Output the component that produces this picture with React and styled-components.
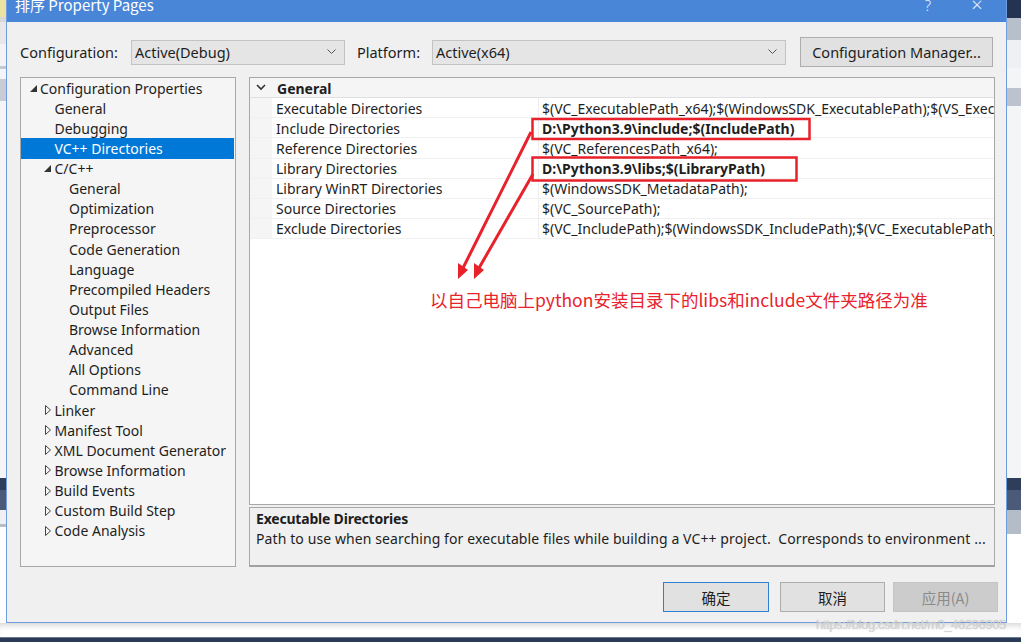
import React from "react";
import styled, { createGlobalStyle } from "styled-components";

const GlobalStyle = createGlobalStyle`
  html, body { margin: 0; padding: 0; background: #ffffff; }
  body { font-family: "Noto Sans", "Noto Sans CJK SC", sans-serif; overflow: hidden; }
  #root { width: 1021px; height: 642px; }
`;

const FONT = `"Noto Sans", "Noto Sans CJK SC", sans-serif`;

const Screen = styled.div`
  position: relative;
  width: 1021px;
  height: 642px;
  display: grid;
  grid-template-columns: 6px 1001px 14px;
  grid-template-rows: 623px 14px 5px;
  background: #ffffff;
  overflow: hidden;
`;

const Strip = styled.div`
  display: flex;
  flex-direction: column;
  background: #f4f5f7;
`;

const StripBlock = styled.div`
  height: ${(p) => p.h}px;
  background: ${(p) => p.c};
  flex: ${(p) => (p.grow ? 1 : "none")};
`;

const BottomGap = styled.div`
  grid-column: 1 / 4;
  background: #ffffff;
  box-shadow: inset 0 6px 6px -4px rgba(0, 0, 0, 0.18);
`;

const BottomBar = styled.div`
  grid-column: 1 / 4;
  background: #2b3a55;
  border-top: 1px solid #6a7a96;
`;

const Dialog = styled.div`
  display: flex;
  flex-direction: column;
  background: #f0f0f0;
  border: 1px solid #6f9be0;
  border-top: none;
  font-family: ${FONT};
  color: #1e1e1e;
  position: relative;
`;

const TitleBar = styled.div`
  height: 22px;
  background: #4a86d8;
  display: flex;
  align-items: flex-start;
  color: #ffffff;
  overflow: hidden;
`;

const TitleText = styled.div`
  flex: 1;
  font-size: 15px;
  line-height: 14px;
  margin-top: -2px;
  padding-left: 8px;
  font-family: "Noto Sans CJK SC", "Noto Sans", sans-serif;
`;

const TitleButton = styled.div`
  width: ${(p) => p.w}px;
  display: flex;
  justify-content: center;
  font-size: ${(p) => p.fs}px;
  line-height: 14px;
  margin-top: -2px;
  color: #e6eefa;
  font-weight: 300;
`;

const Body = styled.div`
  flex: 1;
  display: flex;
  flex-direction: column;
  padding: 15px 11px 0 13px;
`;

const ConfigRow = styled.div`
  display: flex;
  align-items: center;
  height: 30px;
`;

const Label = styled.span`
  font-size: 14.5px;
  margin-right: ${(p) => p.mr}px;
  margin-left: ${(p) => p.ml || 0}px;
  white-space: nowrap;
`;

const Select = styled.div`
  width: ${(p) => p.w}px;
  height: 25px;
  box-sizing: border-box;
  background: #e5e5e5;
  border: 1px solid #c3c3c3;
  display: flex;
  align-items: center;
  justify-content: space-between;
  padding: 0 8px 0 3px;
  font-size: 14.5px;
`;

const Chevron = styled.svg`
  width: 9px;
  height: 6px;
`;

const Button = styled.div`
  box-sizing: border-box;
  width: ${(p) => p.w}px;
  height: ${(p) => p.h || 30}px;
  margin-left: ${(p) => p.ml || 0}px;
  display: flex;
  align-items: center;
  justify-content: center;
  background: ${(p) => (p.disabled ? "#cccccc" : "#e1e1e1")};
  border: 1px solid ${(p) => (p.primary ? "#2f7fd6" : p.disabled ? "#c4c4c4" : "#adadad")};
  color: ${(p) => (p.disabled ? "#8a8a8a" : "#1e1e1e")};
  font-size: 14.5px;
  font-family: ${(p) => (p.cjk ? `"Noto Sans CJK SC", sans-serif` : FONT)};
`;

const Main = styled.div`
  display: flex;
  margin-top: 10px;
  gap: 13px;
  height: 490px;
`;

const Tree = styled.div`
  width: 216px;
  box-sizing: border-box;
  background: #f5f5f5;
  border: 1px solid #a8a8a8;
`;

const TreeRow = styled.div`
  height: 20.14px;
  display: flex;
  align-items: center;
  font-size: 14px;
  white-space: nowrap;
  padding-left: ${(p) => 5 + p.level * 14.5}px;
  background: ${(p) => (p.selected ? "#0078d7" : "transparent")};
  color: ${(p) => (p.selected ? "#ffffff" : "#1e1e1e")};
  margin-right: 1px;
`;

const Toggle = styled.span`
  width: 14px;
  display: inline-flex;
  align-items: center;
  justify-content: center;
  flex: none;
`;

const RightCol = styled.div`
  flex: 1;
  display: flex;
  flex-direction: column;
  gap: 2px;
`;

const Grid = styled.div`
  height: 428px;
  box-sizing: border-box;
  background: #ffffff;
  border: 1px solid #a8a8a8;
  overflow: hidden;
`;

const GridRow = styled.div`
  display: grid;
  grid-template-columns: 22px 266px 1fr;
  height: 20.14px;
  font-size: 14px;
  white-space: nowrap;
  border-bottom: 1px solid ${(p) => (p.header ? "#e0e0e0" : "#f0f0f0")};
  box-sizing: border-box;
`;

const Margin = styled.div`
  background: #f5f5f5;
  display: flex;
  align-items: center;
  justify-content: center;
`;

const Cell = styled.div`
  display: flex;
  align-items: center;
  padding-left: ${(p) => p.pl || 4}px;
  padding-top: 1px;
  overflow: hidden;
  background: ${(p) => (p.header ? "#f5f5f5" : "#ffffff")};
  border-left: ${(p) => (p.sep ? "1px solid #ededed" : "none")};
  font-weight: ${(p) => (p.bold ? 700 : 400)};
  grid-column: ${(p) => (p.span ? "2 / 4" : "auto")};
`;

const Desc = styled.div`
  height: 60px;
  box-sizing: border-box;
  background: #f0f0f0;
  border: 1px solid #a8a8a8;
  border-bottom: 2px solid #a0a0a0;
  padding: 1px 6px;
  font-size: 14px;
`;

const DescTitle = styled.div`
  font-weight: 700;
  line-height: 20px;
  letter-spacing: -0.2px;
`;

const DescText = styled.div`
  line-height: 20px;
  white-space: nowrap;
  letter-spacing: 0.1px;
`;

const Footer = styled.div`
  display: flex;
  justify-content: flex-end;
  margin-top: 15px;
  margin-right: -3px;
`;

const Annotation = styled.svg`
  position: absolute;
  left: 0;
  top: 0;
  width: 1001px;
  height: 623px;
  pointer-events: none;
  overflow: visible;
`;

const Note = styled.div`
  position: absolute;
  left: 423px;
  top: 287px;
  font-size: 17.5px;
  color: #e8232c;
  font-family: "Noto Sans CJK SC", "Noto Sans", sans-serif;
  white-space: nowrap;
`;

const Watermark = styled.div`
  position: absolute;
  left: 816px;
  top: 617px;
  font-size: 13px;
  letter-spacing: -0.4px;
  color: rgba(215, 215, 215, 0.9);
  font-family: "Liberation Sans", sans-serif;
  text-shadow: 0 0 1px rgba(140, 140, 140, 0.5);
  white-space: nowrap;
`;

const OpenTri = () => (
  <svg width="7" height="7" viewBox="0 0 7 7">
    <polygon points="7,0 7,7 0,7" fill="#333" />
  </svg>
);

const ClosedTri = () => (
  <svg width="6" height="10" viewBox="0 0 6 10">
    <polygon points="0.5,0.5 5.5,5 0.5,9.5" fill="none" stroke="#444" strokeWidth="1" />
  </svg>
);

const treeItems = [
  { label: "Configuration Properties", level: 0, t: "open" },
  { label: "General", level: 1 },
  { label: "Debugging", level: 1 },
  { label: "VC++ Directories", level: 1, selected: true },
  { label: "C/C++", level: 1, t: "open" },
  { label: "General", level: 2 },
  { label: "Optimization", level: 2 },
  { label: "Preprocessor", level: 2 },
  { label: "Code Generation", level: 2 },
  { label: "Language", level: 2 },
  { label: "Precompiled Headers", level: 2 },
  { label: "Output Files", level: 2 },
  { label: "Browse Information", level: 2 },
  { label: "Advanced", level: 2 },
  { label: "All Options", level: 2 },
  { label: "Command Line", level: 2 },
  { label: "Linker", level: 1, t: "closed" },
  { label: "Manifest Tool", level: 1, t: "closed" },
  { label: "XML Document Generator", level: 1, t: "closed" },
  { label: "Browse Information", level: 1, t: "closed" },
  { label: "Build Events", level: 1, t: "closed" },
  { label: "Custom Build Step", level: 1, t: "closed" },
  { label: "Code Analysis", level: 1, t: "closed" },
];

const props = [
  ["Executable Directories", "$(VC_ExecutablePath_x64);$(WindowsSDK_ExecutablePath);$(VS_ExecutablePath);$(MSBuild_ExecutablePath)"],
  ["Include Directories", "D:\\Python3.9\\include;$(IncludePath)", true],
  ["Reference Directories", "$(VC_ReferencesPath_x64);"],
  ["Library Directories", "D:\\Python3.9\\libs;$(LibraryPath)", true],
  ["Library WinRT Directories", "$(WindowsSDK_MetadataPath);"],
  ["Source Directories", "$(VC_SourcePath);"],
  ["Exclude Directories", "$(VC_IncludePath);$(WindowsSDK_IncludePath);$(VC_ExecutablePath_x64)"],
];

const DownChevron = () => (
  <Chevron viewBox="0 0 9 6">
    <polyline points="0.5,0.5 4.5,4.5 8.5,0.5" fill="none" stroke="#555" strokeWidth="1" />
  </Chevron>
);

export default function App() {
  return (
    <>
      <GlobalStyle />
      <Screen>
        <Strip>
          <StripBlock h={17} c="#ece3a2" />
          <StripBlock h={5} c="#d8d8d8" />
          <StripBlock h={22} c="#e8e8ea" />
          <StripBlock h={22} c="#f2f3f5" />
          <StripBlock h={3} c="#c4c8d0" />
          <StripBlock h={10} c="#f4f5f7" />
          <StripBlock h={22} c="#c7ccd5" />
          <StripBlock h={377} c="#f4f5f7" />
          <StripBlock h={12} c="#2d3d5a" />
          <StripBlock h={20} c="#4a5a78" />
          <StripBlock h={14} c="#eef0f3" />
          <StripBlock h={3} c="#b8bec8" />
          <StripBlock grow c="#ffffff" />
        </Strip>

        <Dialog>
          <TitleBar>
            <TitleText>排序 Property Pages</TitleText>
            <TitleButton w={40} fs={15}>?</TitleButton>
            <TitleButton w={58} fs={20}>×</TitleButton>
          </TitleBar>
          <Body>
            <ConfigRow>
              <Label mr={13}>Configuration:</Label>
              <Select w={214}>
                <span>Active(Debug)</span>
                <DownChevron />
              </Select>
              <Label ml={12} mr={12}>Platform:</Label>
              <Select w={354}>
                <span>Active(x64)</span>
                <DownChevron />
              </Select>
              <Button w={193} h={30} ml={14}>Configuration Manager...</Button>
            </ConfigRow>

            <Main>
              <Tree>
                {treeItems.map((it, i) => (
                  <TreeRow key={i} level={it.level} selected={it.selected}>
                    <Toggle>
                      {it.t === "open" ? <OpenTri /> : it.t === "closed" ? <ClosedTri /> : null}
                    </Toggle>
                    {it.label}
                  </TreeRow>
                ))}
              </Tree>

              <RightCol>
                <Grid>
                  <GridRow header>
                    <Margin>
                      <svg width="10" height="7" viewBox="0 0 10 7">
                        <polyline points="1,1 5,5 9,1" fill="none" stroke="#333" strokeWidth="1.6" />
                      </svg>
                    </Margin>
                    <Cell header bold span pl={5}>General</Cell>
                  </GridRow>
                  {props.map(([name, value, bold], i) => (
                    <GridRow key={i}>
                      <Margin />
                      <Cell>{name}</Cell>
                      <Cell sep bold={bold} pl={3}>{value}</Cell>
                    </GridRow>
                  ))}
                </Grid>
                <Desc>
                  <DescTitle>Executable Directories</DescTitle>
                  <DescText>
                    Path to use when searching for executable files while building a VC++ project.&nbsp; Corresponds to environment ...
                  </DescText>
                </Desc>
              </RightCol>
            </Main>

            <Footer>
              <Button w={106} h={30} primary cjk>确定</Button>
              <Button w={105} h={30} ml={11} cjk>取消</Button>
              <Button w={105} h={30} ml={8} disabled cjk>应用(A)</Button>
            </Footer>
          </Body>

          <Annotation viewBox="0 0 1001 623">
            <rect x="525.5" y="119" width="277" height="20" fill="none" stroke="#e8212a" strokeWidth="2.5" />
            <rect x="525.5" y="157.5" width="264" height="23" fill="none" stroke="#e8212a" strokeWidth="2.5" />
            <line x1="524" y1="132" x2="456" y2="268" stroke="#e8212a" strokeWidth="3" />
            <polygon points="451,279 451,263 461,270" fill="#e8212a" />
            <line x1="526" y1="174" x2="472" y2="268" stroke="#e8212a" strokeWidth="3" />
            <polygon points="467,279 467,263 477,270" fill="#e8212a" />
          </Annotation>
          <Note>以自己电脑上python安装目录下的libs和include文件夹路径为准</Note>
        </Dialog>

        <Strip>
          <StripBlock h={18} c="#243352" />
          <StripBlock h={22} c="#b7bfcb" />
          <StripBlock h={28} c="#eef0f3" />
          <StripBlock h={20} c="#f4f5f7" />
          <StripBlock h={18} c="#bcc3cf" />
          <StripBlock h={372} c="#f4f5f7" />
          <StripBlock h={12} c="#2d3d5a" />
          <StripBlock h={20} c="#4a5a78" />
          <StripBlock h={24} c="#b4bcc8" />
          <StripBlock grow c="#ffffff" />
        </Strip>

        <BottomGap />
        <BottomBar />
        <Watermark>https://blog.csdn.net/m0_46296905</Watermark>
      </Screen>
    </>
  );
}
